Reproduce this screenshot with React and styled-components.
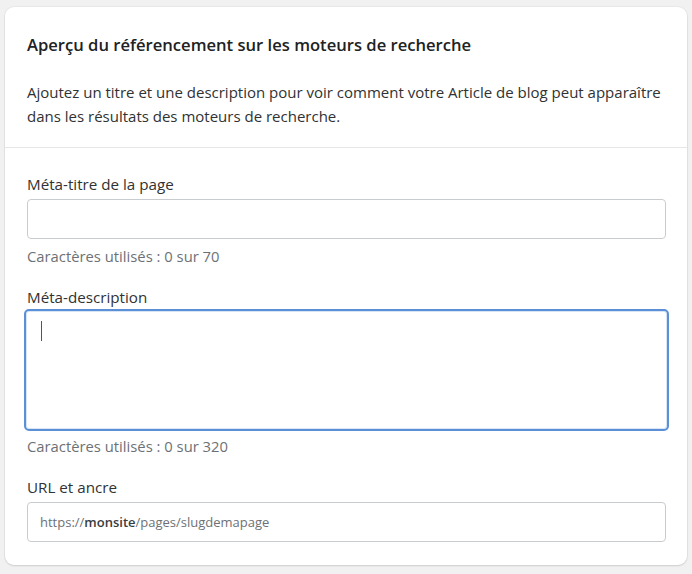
import React from "react";
import styled, { createGlobalStyle } from "styled-components";

const Global = createGlobalStyle`
  html, body { margin: 0; padding: 0; background: #f1f1f1; }
  body { font-family: "Open Sans", "Noto Sans", sans-serif; color: #202223; }
  * { box-sizing: border-box; }
`;

const Page = styled.div`
  padding: 7px 5px 9px 5px;
`;

const Card = styled.div`
  background: #fff;
  border-radius: 9px;
  box-shadow: 0 1px 2px rgba(0,0,0,0.12), 0 0 0 1px rgba(0,0,0,0.03);
  overflow: hidden;
`;

const Header = styled.div`
  padding: 26px 22px 19px 22px;
  border-bottom: 1px solid #e6e6e6;
`;

const Title = styled.h2`
  margin: 0;
  font-size: 16.6px;
  font-weight: 600;
  line-height: 24px;
  color: #202223;
`;

const Desc = styled.p`
  margin: 23px 0 0 0;
  font-size: 15px;
  line-height: 24px;
  color: #303233;
`;

const Body = styled.div`
  padding: 24px 21px 23px 22px;
  display: flex;
  flex-direction: column;
`;

const Field = styled.div`
  display: flex;
  flex-direction: column;
  margin-bottom: ${(p) => p.$mb || 0}px;
`;

const Label = styled.label`
  font-size: 15.2px;
  line-height: 24px;
  color: #303233;
  margin-bottom: 3px;
`;

const Input = styled.div`
  height: 40px;
  border: 1px solid #c9cccf;
  border-radius: 4px;
  background: #fff;
  display: flex;
  align-items: center;
  padding: 0 12px;
  font-size: 13px;
  color: #6d7175;
`;

const TextArea = styled.div`
  height: 122px;
  margin: -3px -3px -2px -3px;
  border: 2px solid #5b8fd6;
  border-radius: 5px;
  box-shadow: inset 0 0 0 1px #d6e4f6;
  background: #fff;
  padding: 10px 15px;
`;

const Caret = styled.span`
  display: block;
  width: 1px;
  height: 20px;
  background: #555;
`;

const Help = styled.div`
  font-size: 14.8px;
  line-height: 22px;
  color: #6d7175;
  margin-top: 6px;
`;

const Strong = styled.span`
  color: #3a3c3e;
  font-weight: 600;
`;

export default function App() {
  return (
    <>
      <Global />
      <Page>
        <Card>
          <Header>
            <Title>Aperçu du référencement sur les moteurs de recherche</Title>
            <Desc>
              Ajoutez un titre et une description pour voir comment votre Article de blog peut apparaître
              dans les résultats des moteurs de recherche.
            </Desc>
          </Header>
          <Body>
            <Field $mb={18}>
              <Label>Méta-titre de la page</Label>
              <Input />
              <Help>Caractères utilisés : 0 sur 70</Help>
            </Field>
            <Field $mb={18}>
              <Label>Méta-description</Label>
              <TextArea>
                <Caret />
              </TextArea>
              <Help>Caractères utilisés : 0 sur 320</Help>
            </Field>
            <Field>
              <Label>URL et ancre</Label>
              <Input>
                https://<Strong>monsite</Strong>/pages/slugdemapage
              </Input>
            </Field>
          </Body>
        </Card>
      </Page>
    </>
  );
}
